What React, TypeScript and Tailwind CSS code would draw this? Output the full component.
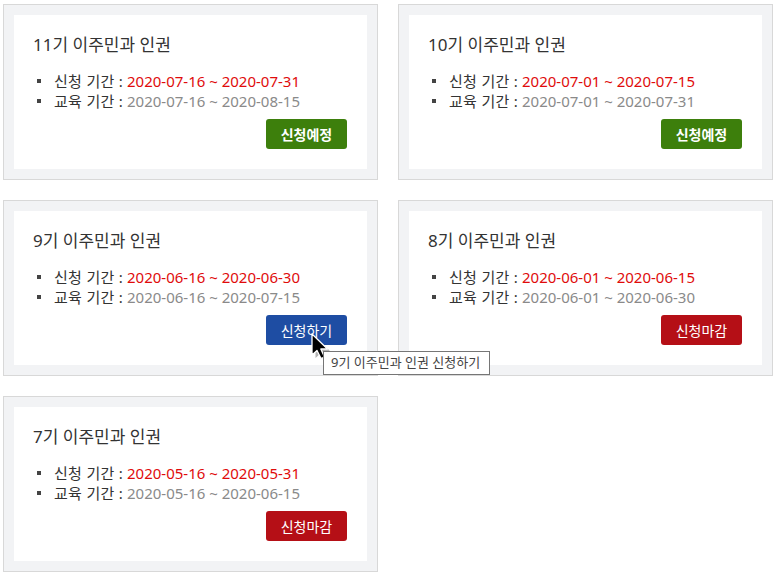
import React from 'react';

type Course = {
  gen: number;
  apply: string;
  edu: string;
  status: 'soon' | 'open' | 'closed';
};

const courses: Course[] = [
  { gen: 11, apply: '2020-07-16 ~ 2020-07-31', edu: '2020-07-16 ~ 2020-08-15', status: 'soon' },
  { gen: 10, apply: '2020-07-01 ~ 2020-07-15', edu: '2020-07-01 ~ 2020-07-31', status: 'soon' },
  { gen: 9, apply: '2020-06-16 ~ 2020-06-30', edu: '2020-06-16 ~ 2020-07-15', status: 'open' },
  { gen: 8, apply: '2020-06-01 ~ 2020-06-15', edu: '2020-06-01 ~ 2020-06-30', status: 'closed' },
  { gen: 7, apply: '2020-05-16 ~ 2020-05-31', edu: '2020-05-16 ~ 2020-06-15', status: 'closed' },
];

function StatusButton({ status }: { status: Course['status'] }) {
  if (status === 'soon') {
    return <span className="flex h-[30px] w-[81px] items-center justify-center rounded-[3px] bg-[#3d7f0c] text-[14px] font-bold text-white">신청예정</span>;
  }
  if (status === 'open') {
    return <span className="flex h-[30px] w-[81px] items-center justify-center rounded-[3px] bg-[#1e4da3] text-[14px] text-white">신청하기</span>;
  }
  return <span className="flex h-[30px] w-[81px] items-center justify-center rounded-[3px] bg-[#b50f16] text-[14px] text-white">신청마감</span>;
}

function CourseCard({ c }: { c: Course }) {
  return (
    <div className="h-[176px] border border-[#d8d8d8] bg-[#f2f3f5] p-[10px]">
      <div className="flex h-full flex-col bg-white pl-[19px] pr-[20px] pt-[18px]">
        <h3 className="text-[17px] leading-[24px] text-[#333]">{c.gen}기 이주민과 인권</h3>
        <ul className="mt-[14px] pl-[4px] text-[15px] leading-[20px] text-[#333]">
          <li className="flex items-center">
            <span className="mr-[13px] h-[4px] w-[4px] bg-[#444]" />
            <span className="tracking-[0.3px]">신청 기간 :</span>&nbsp;<span className="text-[#e00b0b]">{c.apply}</span>
          </li>
          <li className="flex items-center">
            <span className="mr-[13px] h-[4px] w-[4px] bg-[#444]" />
            <span className="tracking-[0.3px]">교육 기간 :</span>&nbsp;<span className="text-[#8a8a8a]">{c.edu}</span>
          </li>
        </ul>
        <div className="mt-[8px] flex justify-end">
          <StatusButton status={c.status} />
        </div>
      </div>
    </div>
  );
}

export default function App() {
  return (
    <div className="relative min-h-[576px] w-[776px] bg-white pl-[3px] pt-[4px]" style={{ fontFamily: '"Noto Sans", "Noto Sans CJK KR", sans-serif' }}>
      <div className="grid grid-cols-[375px_375px] gap-x-[20px] gap-y-[20px]">
        {courses.map(c => <CourseCard key={c.gen} c={c} />)}
      </div>

      {/* mouse cursor */}
      <svg className="absolute left-[310px] top-[332px]" width="28" height="30" viewBox="0 0 28 30">
        <path d="M3 3 L3 24 L8 19.5 L12 27.5 L15.5 26 L11.8 18 L18.5 18 Z" fill="rgba(0,0,0,0.3)" transform="translate(2.5 2)" />
        <path d="M2 2 L2 23 L7 18.5 L11 26.5 L14.5 25 L10.8 17 L17.5 17 Z" fill="#000" stroke="#fff" strokeWidth="1.3" strokeLinejoin="round" />
      </svg>

      {/* tooltip */}
      <div className="absolute left-[323px] top-[351px] flex h-[24px] w-[167px] items-center whitespace-nowrap border border-[#767676] bg-white px-[7px] text-[13px] text-[#444]">
        9기 이주민과 인권 신청하기
      </div>
    </div>
  );
}
